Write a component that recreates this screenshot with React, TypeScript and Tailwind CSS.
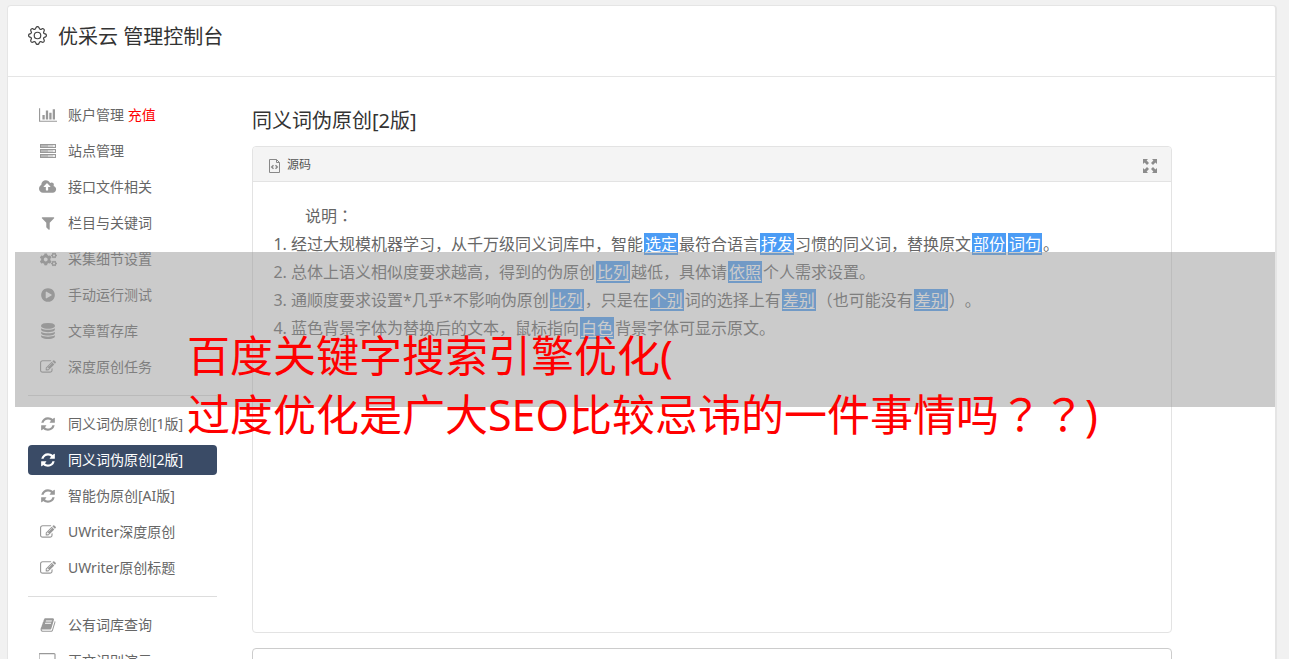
import { clsx } from "clsx";
import type { ReactNode } from "react";
import { BsGear } from "react-icons/bs";
import { FaCogs } from "react-icons/fa";

const icons = {
  chart:
    "M640 896v512h-256v-512h256zm384-512v1024h-256v-1024h256zm1024 1152v128h-2048v-1536h128v1408h1920zm-640-896v768h-256v-768h256zm384-384v1152h-256v-1152h256z",
  cloud:
    "M1280 864q0-14-9-23l-352-352q-9-9-23-9t-23 9l-351 351q-10 12-10 24 0 14 9 23t23 9h224v352q0 13 9.5 22.5t22.5 9.5h192q13 0 22.5-9.5t9.5-22.5v-352h224q13 0 22.5-9.5t9.5-22.5zm640 288q0 159-112.5 271.5t-271.5 112.5h-1088q-185 0-316.5-131.5t-131.5-316.5q0-130 70-240t188-165q-2-30-2-43 0-212 150-362t362-150q156 0 285.5 87t188.5 231q71-62 166-62 106 0 181 75t75 181q0 76-41 138 130 31 213.5 135.5t83.5 238.5z",
  filter:
    "M1595 295q17 41-14 70l-493 493v742q0 42-39 59-13 5-25 5-27 0-45-19l-256-256q-19-19-19-45v-486l-493-493q-31-29-14-70 17-39 59-39h1280q42 0 59 39z",
  play:
    "M896 128q209 0 385.5 103t279.5 279.5 103 385.5-103 385.5-279.5 279.5-385.5 103-385.5-103-279.5-279.5-103-385.5 103-385.5 279.5-279.5 385.5-103zm384 823q32-18 32-55t-32-55l-544-320q-31-19-64-1-32 19-32 56v640q0 37 32 56 16 8 32 8 17 0 32-9z",
  database:
    "M896 768q237 0 443-43t325-127v170q0 69-103 128t-280 93.5-385 34.5-385-34.5-280-93.5-103-128v-170q119 84 325 127t443 43zm0 768q237 0 443-43t325-127v170q0 69-103 128t-280 93.5-385 34.5-385-34.5-280-93.5-103-128v-170q119 84 325 127t443 43zm0-384q237 0 443-43t325-127v170q0 69-103 128t-280 93.5-385 34.5-385-34.5-280-93.5-103-128v-170q119 84 325 127t443 43zm0-1152q208 0 385 34.5t280 93.5 103 128v128q0 69-103 128t-280 93.5-385 34.5-385-34.5-280-93.5-103-128v-128q0-69 103-128t280-93.5 385-34.5z",
  edit:
    "M888 1184l116-116-152-152-116 116v56h96v96h56zm440-720q-16-16-33 1l-350 350q-17 17-1 33t33-1l350-350q17-17 1-33zm80 594v190q0 119-84.5 203.5t-203.5 84.5h-832q-119 0-203.5-84.5t-84.5-203.5v-832q0-119 84.5-203.5t203.5-84.5h832q63 0 117 25 15 7 18 23 3 17-9 29l-49 49q-14 14-32 8-23-6-45-6h-832q-66 0-113 47t-47 113v832q0 66 47 113t113 47h832q66 0 113-47t47-113v-126q0-13 9-22l64-64q15-15 35-7t20 29zm-96-738l288 288-672 672h-288v-288zm444 132l-92 92-288-288 92-92q28-28 68-28t68 28l152 152q28 28 28 68t-28 68z",
  refresh:
    "M1639 1056q0 5-1 7-64 268-268 434.5t-478 166.5q-146 0-282.5-55t-243.5-157l-129 129q-19 19-45 19t-45-19-19-45v-448q0-26 19-45t45-19h448q26 0 45 19t19 45-19 45l-137 137q71 66 161 102t187 36q134 0 250-65t186-179q11-17 53-117 8-23 30-23h192q13 0 22.5 9.5t9.5 22.5zm25-800v448q0 26-19 45t-45 19h-448q-26 0-45-19t-19-45 19-45l138-138q-148-137-349-137-134 0-250 65t-186 179q-11 17-53 117-8 23-30 23h-199q-13 0-22.5-9.5t-9.5-22.5v-7q65-268 270-434.5t480-166.5q146 0 284 55.5t245 156.5l130-129q19-19 45-19t45 19 19 45z",
  book:
    "M1703 478q40 57 18 129l-275 906q-19 64-76.5 107.5t-122.5 43.5h-923q-77 0-148.5-53.5t-99.5-131.5q-24-67-2-127 0-4 3-27t4-37q1-8-3-21.5t-3-19.5q2-11 8-21t16.5-23.5 16.5-23.5q23-38 45-91.5t30-91.5q3-10 .5-30t-.5-28q3-11 17-28t17-23q21-36 42-92t25-90q1-9-2.5-32t.5-28q4-13 22-30.5t22-22.5q19-26 42.5-84.5t27.5-96.5q1-8-3-25.5t-2-26.5q2-8 9-18t18-23 17-21q8-12 16.5-30.5t15-35 16-36 19.5-32 26.5-23.5 36-11.5 47.5 5.5l-1 3q38-9 51-9h761q74 0 114 56t18 130l-274 906q-36 119-71.5 153.5t-128.5 34.5h-869q-27 0-38 15-11 16-1 43 24 70 144 70h923q29 0 56-15.5t35-41.5l300-987q7-22 5-57 38 15 59 43zm-1064 2q-4 13 2 22.5t20 9.5h608q13 0 25.5-9.5t16.5-22.5l21-64q4-13-2-22.5t-20-9.5h-608q-13 0-25.5 9.5t-16.5 22.5zm-83 256q-4 13 2 22.5t20 9.5h608q13 0 25.5-9.5t16.5-22.5l21-64q4-13-2-22.5t-20-9.5h-608q-13 0-25.5 9.5t-16.5 22.5z",
  desktop:
    "M1728 992v-832q0-13-9.5-22.5t-22.5-9.5h-1600q-13 0-22.5 9.5t-9.5 22.5v832q0 13 9.5 22.5t22.5 9.5h1600q13 0 22.5-9.5t9.5-22.5zm128-832v1088q0 66-47 113t-113 47h-544q0 37 16 77.5t32 71 16 43.5q0 26-19 45t-45 19h-512q-26 0-45-19t-19-45q0-14 16-44t32-70 16-78h-544q-66 0-113-47t-47-113v-1088q0-66 47-113t113-47h1600q66 0 113 47t47 113z",
};

function Icon({ d, units = 1792 }: { d: string; units?: number }) {
  return (
    <svg viewBox={`0 0 ${units} 1792`} className="h-4 w-auto" fill="currentColor" aria-hidden="true">
      <path d={d} />
    </svg>
  );
}

function ServerIcon() {
  return (
    <svg viewBox="0 0 16 14" className="h-3.5 w-4" aria-hidden="true">
      {[0, 5, 10].map((y) => (
        <g key={y}>
          <rect x="0" y={y} width="16" height="4" fill="currentColor" />
          <rect x="1" y={y + 1} width="7" height="2" fill="#fff" opacity="0.3" />
          <rect x="8" y={y + 1} width="5" height="2" fill="#fff" opacity="0.55" />
          <rect x="13" y={y + 1} width="2" height="2" fill="#fff" opacity="0.8" />
        </g>
      ))}
    </svg>
  );
}

interface MenuItem {
  name: string;
  icon: ReactNode;
  extra?: string;
  active?: boolean;
}

const menuGroups: MenuItem[][] = [
  [
    { name: "账户管理", icon: <Icon d={icons.chart} units={2048} />, extra: "充值" },
    { name: "站点管理", icon: <ServerIcon /> },
    { name: "接口文件相关", icon: <Icon d={icons.cloud} units={1920} /> },
    { name: "栏目与关键词", icon: <Icon d={icons.filter} /> },
    { name: "采集细节设置", icon: <FaCogs className="size-[17px]" /> },
    { name: "手动运行测试", icon: <Icon d={icons.play} /> },
    { name: "文章暂存库", icon: <Icon d={icons.database} /> },
    { name: "深度原创任务", icon: <Icon d={icons.edit} /> },
  ],
  [
    { name: "同义词伪原创[1版]", icon: <Icon d={icons.refresh} /> },
    { name: "同义词伪原创[2版]", icon: <Icon d={icons.refresh} />, active: true },
    { name: "智能伪原创[AI版]", icon: <Icon d={icons.refresh} /> },
    { name: "UWriter深度原创", icon: <Icon d={icons.edit} /> },
    { name: "UWriter原创标题", icon: <Icon d={icons.edit} /> },
  ],
  [
    { name: "公有词库查询", icon: <Icon d={icons.book} /> },
    { name: "正文识别演示", icon: <Icon d={icons.desktop} units={1920} /> },
  ],
];

function Sidebar() {
  return (
    <nav className="flex w-[189px] shrink-0 flex-col gap-1.5 text-sm">
      {menuGroups.map((group, i) => (
        <div key={i} className="flex flex-col gap-1.5">
          {i > 0 && <hr className="my-[7px] border-[#dddddd]" />}
          {group.map((item) => (
            <a
              key={item.name}
              href="#"
              className={clsx(
                "flex h-[30px] items-center rounded px-2.5",
                item.active ? "bg-[#3a4b66] text-white" : "text-[#666666]"
              )}
            >
              <span
                className={clsx(
                  "mr-2.5 flex w-5 shrink-0 justify-center",
                  item.active ? "text-white" : "text-[#999999]"
                )}
              >
                {item.icon}
              </span>
              <span className="whitespace-nowrap">
                {item.name}
                {item.extra && <span className="text-[#ff0000]"> {item.extra}</span>}
              </span>
            </a>
          ))}
        </div>
      ))}
    </nav>
  );
}

// A word that was swapped for a synonym
function Mark({ children }: { children: ReactNode }) {
  return <span className="mx-px bg-[#4b9cf5] px-px text-white underline underline-offset-2">{children}</span>;
}

// Full-width punctuation, centred in its cell
function Wide({ children }: { children: ReactNode }) {
  return (
    <span lang="zh-TW" className="font-['Noto_Sans_CJK_TC',sans-serif] leading-none">
      {children}
    </span>
  );
}

function SourcePanel() {
  return (
    <section className="rounded border border-[#e3e3e3]">
      <div className="flex h-[35px] items-center justify-between rounded-t border-b border-[#e3e3e3] bg-[#f4f4f4] pr-3.5 pl-4">
        <div className="flex items-center gap-[7px] pt-0.5 text-xs text-[#555555]">
          <svg viewBox="0 0 11 14" className="mt-0.5 h-3.5 w-[11px]" fill="none" stroke="#888888" aria-hidden="true">
            <path d="M.5.5h7l3 3v10H.5zM7.5.5v3h3" />
            <path d="M4.5 6.2 2.7 8l1.8 1.8M6.5 6.2 8.3 8 6.5 9.8" strokeWidth="1.4" />
          </svg>
          源码
        </div>
        <button type="button" aria-label="全屏" className="mt-1 text-[#8c8c8c]">
          <svg viewBox="0 0 14 14" className="size-3.5" fill="currentColor" aria-hidden="true">
            <path d="M0 0h5L3.6 1.6 6 4 4 6 1.6 3.6 0 5zM14 0v5l-1.6-1.4L10 6 8 4l2.4-2.4L9 0zM0 14V9l1.6 1.4L4 8l2 2-2.4 2.4L5 14zM14 14H9l1.4-1.6L8 10l2-2 2.4 2.4L14 9z" />
          </svg>
        </button>
      </div>
      <div className="min-h-[450px] p-5 text-base leading-7 text-[#666666]">
        <p className="indent-8">
          说明<Wide>：</Wide>
        </p>
        <ol className="list-decimal pl-[18px]">
          <li>
            经过大规模机器学习，从千万级同义词库中，智能<Mark>选定</Mark>最符合语言<Mark>抒发</Mark>
            习惯的同义词，替换原文<Mark>部份</Mark>
            <Mark>词句</Mark>。
          </li>
          <li>
            总体上语义相似度要求越高，得到的伪原创<Mark>比列</Mark>越低，具体请<Mark>依照</Mark>个人需求设置。
          </li>
          <li>
            通顺度要求设置*几乎*不影响伪原创<Mark>比列</Mark>，只是在<Mark>个别</Mark>词的选择上有
            <Mark>差别</Mark>（也可能没有<Mark>差别</Mark>）。
          </li>
          <li>
            蓝色背景字体为替换后的文本，鼠标指向<Mark>白色</Mark>背景字体可显示原文。
          </li>
        </ol>
      </div>
    </section>
  );
}

export default function App() {
  return (
    <div
      lang="zh-CN"
      className="relative h-screen overflow-hidden bg-[#f1f1f1] pt-[5px] pr-3 pl-[7px] font-['Noto_Sans','Noto_Sans_CJK_SC',sans-serif] [text-spacing-trim:space-all]"
    >
      <div className="rounded border border-r-2 border-[#e5e5e5] bg-white">
        <header className="flex h-[71px] items-start gap-[11px] border-b border-[#e5e5e5] px-5 pt-[17px]">
          <BsGear className="mt-[3px] size-[19px] text-[#444444]" strokeWidth={0} />
          <h1 className="text-xl leading-7 text-[#333333]">优采云 管理控制台</h1>
        </header>
        <div className="flex gap-[35px] pt-[23px] pr-[103px] pl-5">
          <Sidebar />
          <main className="min-w-0 flex-1 pt-[7px]">
            <h2 className="mb-[11px] text-xl leading-7 text-[#333333]">同义词伪原创[2版]</h2>
            <SourcePanel />
            <textarea
              aria-label="原文"
              className="mt-[15px] block h-40 w-full resize-none rounded border border-[#cccccc]"
            />
          </main>
        </div>
      </div>

      {/* Caption band over the page */}
      <div className="absolute top-[252px] right-3.5 left-[15px] h-[155px] bg-[#979797]/50 pt-[74px] pl-[172px]">
        <p className="text-[43px] leading-[59px] whitespace-nowrap text-[#ff0000]">
          百度关键字搜索引擎优化(
          <br />
          过度优化是广大SEO比较忌讳的一件事情吗<Wide>？？</Wide>)
        </p>
      </div>
    </div>
  );
}
